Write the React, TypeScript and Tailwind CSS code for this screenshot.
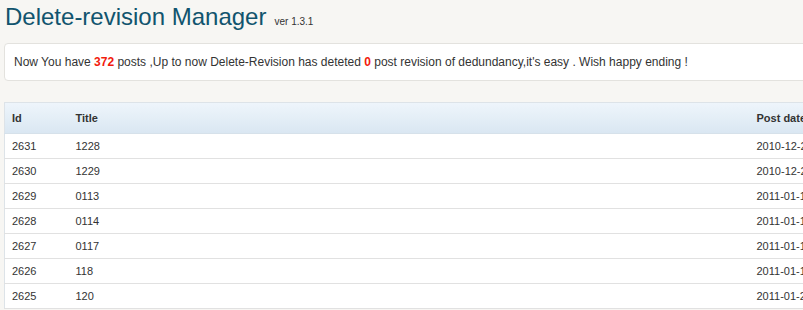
import React from "react"

const rows = [
    { id: 2631, title: "1228", date: "2010-12-28 10:12:41" },
    { id: 2630, title: "1229", date: "2010-12-29 09:40:17" },
    { id: 2629, title: "0113", date: "2011-01-13 11:05:02" },
    { id: 2628, title: "0114", date: "2011-01-14 10:22:56" },
    { id: 2627, title: "0117", date: "2011-01-17 09:31:08" },
    { id: 2626, title: "118", date: "2011-01-18 10:47:33" },
    { id: 2625, title: "120", date: "2011-01-20 09:15:20" },
]

export default function App() {
    return (
        <div className="w-[803px] h-[310px] overflow-hidden bg-[#f7f6f3] font-['Liberation_Sans',Arial,sans-serif] text-[#333]">
            <div className="w-[1000px] pl-[4px]">

                <h2 className="flex items-baseline h-[36px] pt-[2px] pl-[1px] text-[24px] leading-[30px] text-[#11546e]">
                    Delete-revision Manager
                    <span className="ml-[8px] text-[10px] text-[#333]">ver 1.3.1</span>
                </h2>

                <div className="mt-[7px] h-[38px] flex items-center pl-[9px] bg-white border border-[#e3e2de] rounded-[4px] text-[12px]">
                    <p>
                        Now You have <b className="text-[#f21b0c]">372</b> posts ,Up to now Delete-Revision has deteted{" "}
                        <b className="text-[#f21b0c]">0</b> post revision of dedundancy,it's easy . Wish happy ending !
                    </p>
                </div>

                <table className="mt-[21px] w-[1000px] table-fixed border-collapse border-l border-t border-[#dde3e8] bg-white text-[11px] text-left">
                    <colgroup>
                        <col className="w-[64px]" />
                        <col className="w-[681px]" />
                        <col />
                    </colgroup>
                    <thead>
                        <tr className="h-[31px] bg-gradient-to-b from-[#eef5fb] to-[#dae7f2] border-b border-[#d6e1ea]">
                            <th className="pl-[7px] font-bold text-[#333]">Id</th>
                            <th className="pl-[7px] font-bold text-[#333]">Title</th>
                            <th className="pl-[7px] font-bold text-[#333]">Post date</th>
                        </tr>
                    </thead>
                    <tbody>
                        {rows.map((r) => (
                            <tr key={r.id} className="h-[25px] border-b border-[#e1e1e1]">
                                <td className="pl-[7px]">{r.id}</td>
                                <td className="pl-[7px]">{r.title}</td>
                                <td className="pl-[7px]">{r.date}</td>
                            </tr>
                        ))}
                    </tbody>
                </table>
            </div>
        </div>
    )
}
